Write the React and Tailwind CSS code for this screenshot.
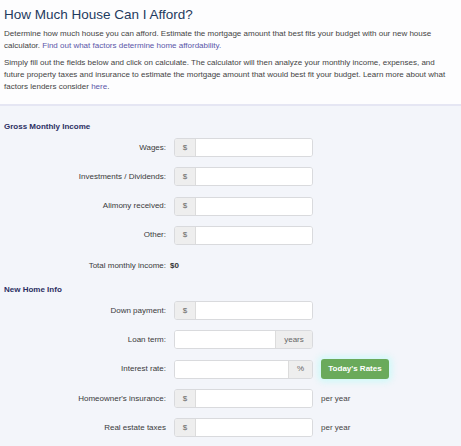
import React from "react";

const incomeRows = [
  { label: "Wages:" },
  { label: "Investments / Dividends:" },
  { label: "Alimony received:" },
  { label: "Other:" },
];

function Addon({ children, className = "" }) {
  return (
    <span className={`flex items-center justify-center bg-[#eeeeee] text-[#666] text-[8px] ${className}`}>
      {children}
    </span>
  );
}

function Row({ label, children, extra }) {
  return (
    <div className="flex items-center h-[19px]">
      <label className="w-[166px] pr-0 text-right text-[8px] text-[#3a3a3a]">{label}</label>
      <div className="ml-[8px] w-[139px] h-full">{children}</div>
      {extra}
    </div>
  );
}

function DollarInput() {
  return (
    <div className="flex h-full w-full rounded-[3px] border border-[#d9dadd] bg-white overflow-hidden shadow-[inset_0_1px_1px_rgba(0,0,0,0.04)]">
      <Addon className="w-[21px] border-r border-[#dcdcdc]">$</Addon>
      <input type="text" className="flex-1 min-w-0 outline-none bg-white" />
    </div>
  );
}

function SuffixInput({ suffix, width }) {
  return (
    <div className="flex h-full w-full rounded-[3px] border border-[#d9dadd] bg-white overflow-hidden">
      <input type="text" className="flex-1 min-w-0 outline-none bg-white" />
      <Addon className={`${width} border-l border-[#dcdcdc]`}>{suffix}</Addon>
    </div>
  );
}

export default function App() {
  return (
    <div className="w-[461px] h-[446px] overflow-hidden bg-[#f3f5fa] font-['Liberation_Sans',Arial,sans-serif]">
      <div className="bg-[#fdfdfe] h-[104px] px-[4px] pt-[7px]">
        <h1 className="text-[13.5px] leading-[16px] text-[#1f3b5f]">How Much House Can I Afford?</h1>
        <p className="mt-[5px] w-[452px] text-[8px] leading-[12px] text-[#444]">
          Determine how much house you can afford. Estimate the mortgage amount that best fits your budget with our new house
          calculator. <a className="text-[#5b57a9]">Find out what factors determine home affordability.</a>
        </p>
        <p className="mt-[5px] w-[452px] text-[8px] leading-[12px] text-[#444]">
          Simply fill out the fields below and click on calculate. The calculator will then analyze your monthly income, expenses, and
          future property taxes and insurance to estimate the mortgage amount that would best fit your budget. Learn more about what
          factors lenders consider <a className="text-[#5b57a9]">here</a>.
        </p>
      </div>
      <div className="h-[2px] bg-[#e5e6f3]" />

      <div className="px-[4px] pt-[15px]">
        <h2 className="text-[8px] leading-[12px] font-bold text-[#2c2f63]">Gross Monthly Income</h2>
        <div className="mt-[5px] ml-[-4px] flex flex-col gap-[10.3px]">
          {incomeRows.map((r) => (
            <Row key={r.label} label={r.label}>
              <DollarInput />
            </Row>
          ))}
          <div className="flex items-center h-[19px] pt-[2px]">
            <span className="w-[166px] text-right text-[8px] text-[#3a3a3a]">Total monthly income:</span>
            <span className="ml-[4px] text-[8px] font-bold text-[#333]">$0</span>
          </div>
        </div>

        <h2 className="mt-[10px] text-[8px] leading-[12px] font-bold text-[#2c2f63]">New Home Info</h2>
        <div className="mt-[5px] ml-[-4px] flex flex-col gap-[10.3px]">
          <Row label="Down payment:">
            <DollarInput />
          </Row>
          <Row label="Loan term:">
            <SuffixInput suffix="years" width="w-[37px]" />
          </Row>
          <Row
            label="Interest rate:"
            extra={
              <button className="ml-[8px] h-[20px] w-[68px] rounded-[3px] bg-[#6aaa5b] text-white text-[8px] font-bold shadow-[0_0_6px_3px_rgba(200,250,248,0.8)]">
                Today's Rates
              </button>
            }
          >
            <SuffixInput suffix="%" width="w-[24px]" />
          </Row>
          <Row label="Homeowner's insurance:" extra={<span className="ml-[8px] text-[8px] text-[#444]">per year</span>}>
            <DollarInput />
          </Row>
          <Row label="Real estate taxes" extra={<span className="ml-[8px] text-[8px] text-[#444]">per year</span>}>
            <DollarInput />
          </Row>
        </div>
      </div>
    </div>
  );
}
